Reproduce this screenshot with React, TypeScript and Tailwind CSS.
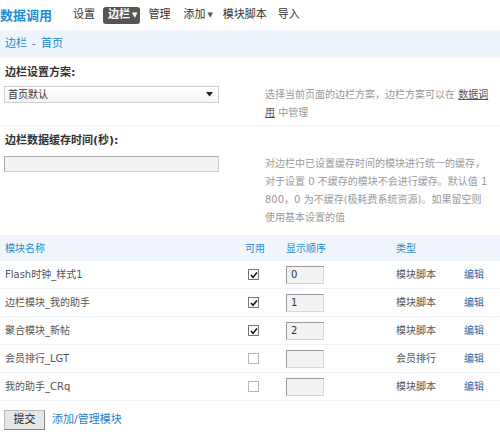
import React from "react";

const FONT = "font-['DejaVu_Sans','Noto_Sans_CJK_SC',sans-serif]";

type Row = { name: string; on: boolean; order: string; kind: string };

const ROWS: Row[] = [
  { name: "Flash时钟_样式1", on: true, order: "0", kind: "模块脚本" },
  { name: "边栏模块_我的助手", on: true, order: "1", kind: "模块脚本" },
  { name: "聚合模块_新帖", on: true, order: "2", kind: "模块脚本" },
  { name: "会员排行_LGT", on: false, order: "", kind: "会员排行" },
  { name: "我的助手_CRq", on: false, order: "", kind: "模块脚本" },
];

function Check({ on }: { on: boolean }) {
  return (
    <span
      className={
        "w-[11px] h-[11px] border bg-white flex items-center justify-center " +
        (on ? "border-[#777]" : "border-[#b5b5b5]")
      }
    >
      {on && (
        <svg width="8" height="8" viewBox="0 0 8 8">
          <path d="M1 4 L3 6.2 L7 1.5" stroke="#111" strokeWidth="1.6" fill="none" />
        </svg>
      )}
    </span>
  );
}

function Caret() {
  return (
    <svg width="7" height="5" viewBox="0 0 7 5">
      <path d="M0 0 H7 L3.5 4.5 Z" fill="#222" />
    </svg>
  );
}

export default function App() {
  return (
    <div className={"w-[500px] h-[440px] bg-white overflow-hidden text-[#333] " + FONT}>
      {/* top nav */}
      <div className="h-[30px] flex items-center text-[11px]">
        <span className="text-[13px] font-bold text-[#1d8ed6] leading-none">数据调用</span>
        <span className="ml-[21px]">设置</span>
        <span className="ml-[8px] h-[17px] pl-[5px] pr-[3px] bg-[#555] rounded-[3px] text-white font-bold flex items-center gap-[2px]">
          边栏
          <span className="text-[7px] font-normal">▼</span>
        </span>
        <span className="ml-[8px]">管理</span>
        <span className="ml-[13px] flex items-center gap-[2px]">
          添加<span className="text-[7px] text-[#555]">▼</span>
        </span>
        <span className="ml-[10px]">模块脚本</span>
        <span className="ml-[11px]">导入</span>
      </div>

      {/* breadcrumb */}
      <div className="h-[28px] bg-[#eef4fb] flex items-center px-[5px] text-[11px] text-[#1a8bd0]">
        边栏 <span className="mx-[5px]">-</span>首页
      </div>

      {/* section 1 */}
      <div className="px-[4px] pt-[8px] pb-[3px] border-b border-[#f1f3f6]">
        <div className="h-[14px] leading-[14px] text-[11px] font-bold pl-[1px]">边栏设置方案:</div>
        <div className="mt-[6px] flex">
          <div className="w-[215px] h-[17px] border border-[#cfcfcf] bg-gradient-to-b from-white to-[#f4f4f4] flex items-center justify-between pl-[3px] pr-[5px] text-[10px]">
            首页默认
            <Caret />
          </div>
          <div className="ml-[46px] text-[10px] leading-[18px] text-[#999] whitespace-nowrap">
            <div>
              选择当前页面的边栏方案，边栏方案可以在 <span className="underline text-[#555]">数据调</span>
            </div>
            <div>
              <span className="underline text-[#555]">用</span> 中管理
            </div>
          </div>
        </div>
      </div>

      {/* section 2 */}
      <div className="px-[4px] pt-[8px] pb-[8px]">
        <div className="h-[14px] leading-[14px] text-[11px] font-bold pl-[1px]">边栏数据缓存时间(秒):</div>
        <div className="mt-[8px] flex">
          <div className="w-[215px] h-[16px] border border-[#aaa] border-b-[#ccc] border-r-[#ccc] bg-[#f3f3f3]" />
          <div className="ml-[46px] -mt-[1px] text-[10px] leading-[18px] text-[#999] whitespace-nowrap">
            <div>对边栏中已设置缓存时间的模块进行统一的缓存，</div>
            <div>对于设置 0 不缓存的模块不会进行缓存。默认值 1</div>
            <div>800，0 为不缓存(极耗费系统资源)。如果留空则</div>
            <div>使用基本设置的值</div>
          </div>
        </div>
      </div>

      {/* table */}
      <div className="h-[26px] bg-[#f0f6fc] flex items-center pl-[5px] text-[10px] text-[#2a8ccf]">
        <div className="w-[240px]">模块名称</div>
        <div className="w-[41px]">可用</div>
        <div className="w-[110px]">显示顺序</div>
        <div>类型</div>
      </div>
      {ROWS.map((r) => (
        <div
          key={r.name}
          className="h-[28px] border-b border-[#edf2f7] flex items-center pl-[5px] text-[10px] text-[#555]"
        >
          <div className="w-[240px]">{r.name}</div>
          <div className="w-[41px] pl-[3px]">
            <Check on={r.on} />
          </div>
          <div className="w-[110px]">
            <div className="w-[38px] h-[18px] border border-[#999] border-b-[#d5d5d5] border-r-[#d5d5d5] bg-[#f3f3f3] pl-[4px] flex items-center text-[#333]">
              {r.order}
            </div>
          </div>
          <div className="w-[68px]">{r.kind}</div>
          <div className="text-[#2466ab]">编辑</div>
        </div>
      ))}

      {/* footer */}
      <div className="mt-[9px] pl-[4px] flex items-center text-[11px]">
        <button className="w-[41px] h-[20px] border border-[#bbb] border-b-[#888] border-r-[#888] bg-[#e6e6e6] text-[#222]">
          提交
        </button>
        <span className="ml-[7px] text-[#2a7dc8]">添加/管理模块</span>
      </div>
    </div>
  );
}
